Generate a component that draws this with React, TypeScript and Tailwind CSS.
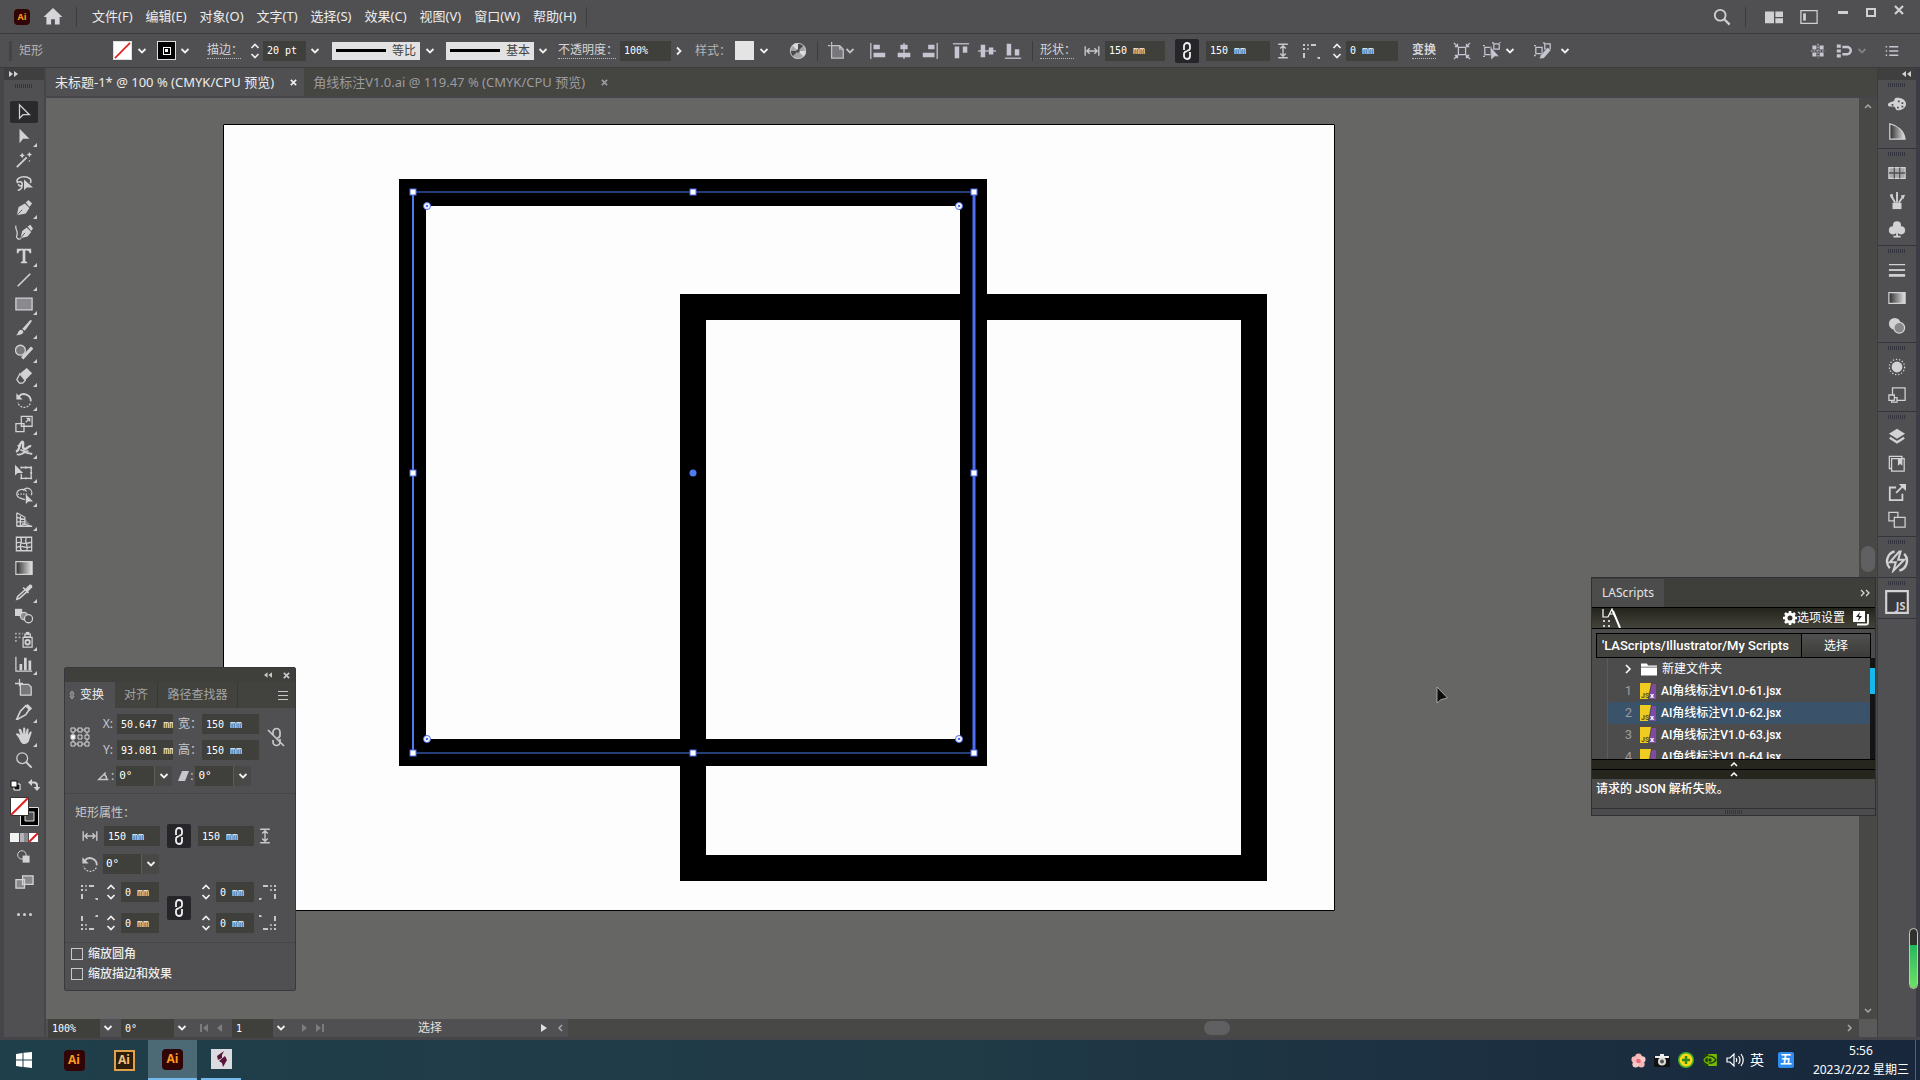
import type { ReactNode } from "react";
import clsx from "clsx";

const sans = "font-['Noto_Sans','Noto_Sans_CJK_SC',sans-serif]";
const mono = "font-['DejaVu_Sans_Mono','Noto_Sans_CJK_SC',monospace]";

/* ---------- shared bits ---------- */

function Icon({ size = "size-5", className, children }: { size?: string; className?: string; children: ReactNode }) {
  return (
    <svg
      viewBox="0 0 20 20"
      className={clsx(size, "shrink-0", className)}
      fill="none"
      stroke="currentColor"
      strokeWidth="1.4"
      aria-hidden
    >
      {children}
    </svg>
  );
}

function Chevron({ label, className }: { label: string; className?: string }) {
  return (
    <button aria-label={label} className={clsx("flex h-5 w-4 shrink-0 items-center justify-center text-[#f0f0f0]", className)}>
      <svg viewBox="0 0 10 6" className="h-[6px] w-[10px]" fill="none" stroke="currentColor" strokeWidth="1.8">
        <path d="M1.5 1 5 4.5 8.5 1" />
      </svg>
    </button>
  );
}

function Spinner({ label, className }: { label: string; className?: string }) {
  return (
    <button aria-label={label} className={clsx("flex h-5 w-3 shrink-0 items-center justify-center text-[#f0f0f0]", className)}>
      <svg viewBox="0 0 10 16" className="h-4 w-[10px]" fill="none" stroke="currentColor" strokeWidth="1.7">
        <path d="M1.5 5 5 1.5 8.5 5M1.5 11 5 14.5 8.5 11" />
      </svg>
    </button>
  );
}

function Field({ label, value, className }: { label: string; value: string; className?: string }) {
  return (
    <input
      aria-label={label}
      defaultValue={value}
      className={clsx("h-5 shrink-0 bg-[#3f3f3b] px-1 text-[10px] text-white outline-none", mono, className)}
    />
  );
}

function LinkButton({ label, className }: { label: string; className?: string }) {
  return (
    <button
      aria-label={label}
      className={clsx("flex size-6 shrink-0 items-center justify-center rounded-[2px] bg-[#26262a] text-[#f0f0f0]", className)}
    >
      <svg viewBox="0 0 10 18" className="h-[18px] w-[10px]" fill="none" stroke="currentColor" strokeWidth="1.8">
        <path d="M2 8V4a3 3 0 0 1 6 0v2a2.500 2.500 0 0 1-3 2.500M8 10v4a3 3 0 0 1-6 0v-2a2.500 2.500 0 0 1 3-2.500" />
      </svg>
    </button>
  );
}

const WidthIcon = ({ className }: { className?: string }) => (
  <Icon size="size-4" className={clsx("text-[#c8c8cc]", className)}>
    <path d="M1.500 4v12M18.500 4v12M4 10h12M7 6.500 3.500 10 7 13.500M13 6.500l3.500 3.500-3.500 3.500" strokeWidth="1.700" />
  </Icon>
);

const HeightIcon = ({ className }: { className?: string }) => (
  <Icon size="size-4" className={clsx("text-[#c8c8cc]", className)}>
    <path d="M4 1.500h12M4 18.500h12M10 4v12M6.500 7 10 3.500 13.500 7M6.500 13l3.500 3.500 3.500-3.500" strokeWidth="1.700" />
  </Icon>
);

function CornerIcon({ turn = "", className }: { turn?: string; className?: string }) {
  return (
    <Icon className={clsx("text-[#c8c8cc]", turn, className)}>
      <path d="M2 4h2M2 8h2M3 12v5M10 4h5" strokeWidth="2" />
      <path d="M6 4h2M6 8h2" strokeWidth="2" opacity=".7" />
      <path d="M16 16h3v2h-2z" fill="currentColor" stroke="none" />
    </Icon>
  );
}

const RotateIcon = () => (
  <>
    <path d="M4 6.500a7.500 7.500 0 0 1 13.500 5" strokeWidth="2" />
    <path d="M17 14a7.500 7.500 0 0 1-14-1.500" strokeDasharray="2 1.500" />
    <path d="M1.500 2.500v7h7z" fill="currentColor" stroke="none" />
  </>
);

function AiBadge({ className, framed }: { className?: string; framed?: boolean }) {
  return (
    <span
      className={clsx(
        "flex shrink-0 items-center justify-center font-['Open_Sans',sans-serif] font-bold",
        framed ? "border-2 border-[#e0a04c] bg-[#2e1c0a] text-[#f2c27c]" : "rounded-[4px] bg-[#310405] text-[#ff9b1a]",
        className,
      )}
    >
      Ai
    </span>
  );
}

const Divider = ({ className }: { className?: string }) => <span className={clsx("h-5 w-px shrink-0 bg-[#3c3c3a]", className)} />;

const Grip = ({ className }: { className?: string }) => (
  <span className={clsx("h-[4px] w-[18px] bg-[repeating-linear-gradient(90deg,#35353f_0_1px,transparent_1px_2px)]", className)} />
);

/* ---------- menu bar ---------- */

const menus = ["文件(F)", "编辑(E)", "对象(O)", "文字(T)", "选择(S)", "效果(C)", "视图(V)", "窗口(W)", "帮助(H)"];

function MenuBar() {
  return (
    <header className="flex h-[34px] shrink-0 items-center border-b border-[#3a3a3a] bg-[#505052] text-[13px] text-[#ececec]">
      <AiBadge className="ml-[14px] size-4 text-[9px]" />
      <button aria-label="主页" className="ml-[13px] text-[#d6d6da]">
        <svg viewBox="0 0 20 18" className="h-[17px] w-5" fill="currentColor">
          <path d="M10 0 20 9.500h-3V17.500h-5v-5.500H8v5.500H3V9.500H0z" />
        </svg>
      </button>
      <Divider className="ml-[13px]" />
      <nav className="ml-[15px] flex gap-[13px] whitespace-nowrap">
        {menus.map((m) => (
          <button key={m}>{m}</button>
        ))}
      </nav>
      <Divider className="ml-[10px]" />
      <div className="ml-auto flex h-full items-center text-[#d0d0d4]">
        <button aria-label="搜索">
          <Icon size="size-[18px]">
            <circle cx="8" cy="8" r="6" strokeWidth="2" />
            <path d="m12.500 12.500 6 6" strokeWidth="2.500" />
          </Icon>
        </button>
        <Divider className="ml-[14px]" />
        <button aria-label="排列文档" className="ml-[19px]">
          <Icon size="size-[18px]">
            <path d="M0 4h10v13H0zM11.500 4H20v6h-8.500zM11.500 11.500H20V17h-8.500z" fill="currentColor" stroke="none" />
          </Icon>
        </button>
        <button aria-label="切换工作区" className="ml-[17px]">
          <Icon size="size-[18px]">
            <path d="M1 3h18v14H1z" />
            <path d="M3.500 6h3v8h-3z" fill="currentColor" stroke="none" />
          </Icon>
        </button>
        <div className="mr-4 ml-[20px] flex h-5 gap-[18px] self-start">
          <button aria-label="最小化" className="flex w-[10px] items-center pt-1">
            <span className="h-[3px] w-[10px] bg-current" />
          </button>
          <button aria-label="最大化" className="flex w-[10px] items-center pt-1">
            <span className="h-[9px] w-[10px] border-2 border-current" />
          </button>
          <button aria-label="关闭" className="flex w-[10px] items-center">
            <svg viewBox="0 0 10 10" className="size-[10px]" stroke="currentColor" strokeWidth="2.200">
              <path d="m1 1 8 8M9 1 1 9" />
            </svg>
          </button>
        </div>
      </div>
    </header>
  );
}

/* ---------- control bar ---------- */

const alignIcons: { label: string; node: ReactNode; gap: string }[] = [
  { label: "左对齐", gap: "ml-[11px]", node: <><path d="M2 1v18" /><path d="M5 3h7v5H5zM5 12h13v5H5z" fill="currentColor" stroke="none" /></> },
  { label: "水平居中", gap: "ml-[8px]", node: <><path d="M10 1v18" /><path d="M6 3h8v5H6zM3 12h14v5H3z" fill="currentColor" stroke="none" /></> },
  { label: "右对齐", gap: "ml-[8px]", node: <><path d="M18 1v18" /><path d="M8 3h7v5H8zM2 12h13v5H2z" fill="currentColor" stroke="none" /></> },
  { label: "顶对齐", gap: "ml-[13px]", node: <><path d="M1 2h18" /><path d="M3 5h5v13H3zM12 5h5v7h-5z" fill="currentColor" stroke="none" /></> },
  { label: "垂直居中", gap: "ml-[8px]", node: <><path d="M0 10h20" /><path d="M3 3h5v14H3zM12 6h5v8h-5z" fill="currentColor" stroke="none" /></> },
  { label: "底对齐", gap: "ml-[8px]", node: <><path d="M1 18h18" /><path d="M3 2h5v13H3zM12 8h5v7h-5z" fill="currentColor" stroke="none" /></> },
];

const dotted = "border-b border-dotted border-[#b8b8c0] leading-4";

function StrokeSample({ text }: { text: string }) {
  return (
    <button className="flex h-[18px] w-[88px] shrink-0 items-center justify-between bg-[#e2e2e2] px-1 text-xs text-[#444]">
      <span className="h-[3px] w-[50px] bg-black" />
      {text}
    </button>
  );
}

function ControlBar() {
  return (
    <div className="flex h-[34px] shrink-0 items-center border-b border-[#3a3a3a] bg-[#505052] text-xs whitespace-nowrap text-[#d4d4d8]">
      <span className="ml-[9px] h-5 w-[3px] bg-[#434343]" />
      <span className="ml-[7px] w-[94px] text-[#b4b4b8]">矩形</span>
      <button aria-label="填色" className="size-[19px] shrink-0 border border-[#ddd] bg-white">
        <svg viewBox="0 0 18 18" className="size-full" stroke="#e02020" strokeWidth="1.800">
          <path d="m1 17 16-16" />
        </svg>
      </button>
      <Chevron label="填色选项" className="ml-[2px]" />
      <button aria-label="描边颜色" className="ml-[7px] flex size-[19px] shrink-0 items-center justify-center border border-[#ddd] bg-black">
        <span className="flex size-[8px] items-center justify-center border border-white">
          <span className="size-[3px] bg-white" />
        </span>
      </button>
      <Chevron label="描边颜色选项" className="ml-[1px]" />
      <button className={clsx("ml-[14px] w-[34px] text-left", dotted)}>描边：</button>
      <Spinner label="描边粗细增减" className="ml-[8px]" />
      <Field label="描边粗细" value="20 pt" className="ml-[2px] w-[43px]" />
      <Chevron label="描边粗细选项" className="ml-[1px]" />
      <div className="ml-[9px]"><StrokeSample text="等比" /></div>
      <Chevron label="变量宽度配置" className="ml-[2px]" />
      <div className="ml-[8px]"><StrokeSample text="基本" /></div>
      <Chevron label="画笔定义" className="ml-[1px]" />
      <button className={clsx("ml-[7px] w-[58px] text-left", dotted)}>不透明度：</button>
      <Field label="不透明度" value="100%" className="ml-[4px] w-[51px]" />
      <Chevron label="不透明度选项" className="-rotate-90" />
      <span className="ml-[8px] w-[34px] text-[#b4b4b8]">样式：</span>
      <button aria-label="图形样式" className="ml-[6px] size-[19px] shrink-0 bg-[#e4e4e4]" />
      <Chevron label="图形样式选项" className="ml-[2px]" />
      <button aria-label="重新着色图稿" className="ml-[17px]">
        <Icon size="size-[18px]" className="text-[#c8c8cc]">
          <circle cx="10" cy="10" r="9" fill="#a4a4a8" stroke="none" />
          <path d="M10 10V1a9 9 0 0 1 6.400 2.600zM10 10l-6.400 6.400A9 9 0 0 1 1 10z" fill="#4a4a4e" stroke="none" />
          <path d="M10 10h9a9 9 0 0 1-2.600 6.400zM10 10 3.600 3.600A9 9 0 0 1 10 1z" fill="#dcdce0" stroke="none" />
          <circle cx="10" cy="10" r="8.500" strokeWidth="1" />
          <circle cx="10" cy="10" r="2" fill="#505052" stroke="none" />
        </Icon>
      </button>
      <Divider className="ml-[10px]" />
      <button aria-label="对齐到画板" className="ml-[10px] flex items-center text-[#c0c0c4]">
        <Icon size="size-[18px]">
          <path d="M4 4h9l4 4v10H4zM13 4v4h4M0 4h3M4 0v3" fill="#77777b" />
        </Icon>
      </button>
      <Chevron label="对齐选项" className="-ml-1 opacity-70" />
      {alignIcons.map((a) => (
        <button key={a.label} aria-label={a.label} className={a.gap}>
          <Icon size="size-[18px]" className="text-[#c6c6d2]">{a.node}</Icon>
        </button>
      ))}
      <Divider className="ml-[10px]" />
      <button className={clsx("ml-[7px] w-[34px] text-left", dotted)}>形状：</button>
      <WidthIcon className="ml-[10px]" />
      <Field label="形状宽度" value="150 mm" className="ml-[5px] w-[60px]" />
      <LinkButton label="约束宽度和高度比例" className="ml-[10px]" />
      <Field label="形状高度" value="150 mm" className="ml-[7px] w-[64px]" />
      <HeightIcon className="ml-[5px]" />
      <CornerIcon className="ml-[10px]" />
      <Spinner label="圆角半径增减" className="ml-[10px]" />
      <Field label="圆角半径" value="0 mm" className="ml-[3px] w-[52px]" />
      <button className={clsx("ml-[14px] font-bold", dotted)}>变换</button>
      <button aria-label="隔离所选对象" className="ml-[17px] text-[#c6c6d2]">
        <Icon size="size-[18px]">
          <path d="M6 6h8v8H6zM1 1l4 4M19 1l-4 4M1 19l4-4M19 19l-4-4M2 5h3V2M18 5h-3V2M2 15h3v3M18 15h-3v3" />
        </Icon>
      </button>
      <button aria-label="选择相似对象" className="ml-[12px] text-[#c6c6d2]">
        <Icon size="size-[18px]">
          <path d="M2 6h7v8H2zM12 2h6v6h-6zM0 4h2M0 16h2M19 1v-1M10 1h2" />
          <path d="m8 5 10 11h-5l-4 4z" fill="currentColor" stroke="#505052" strokeWidth=".6" />
        </Icon>
      </button>
      <Chevron label="选择相似选项" className="ml-[1px]" />
      <button aria-label="编辑相似形状" className="ml-[16px] text-[#c6c6d2]">
        <Icon size="size-[18px]">
          <path d="M2 6h7v7H2zM12 2h6v6h-6zM0 4h2M0 15h2M10 1h2" />
          <path d="m6 19 1-4 8-9 4 3-8 9z" fill="currentColor" stroke="#505052" strokeWidth=".6" />
        </Icon>
      </button>
      <Chevron label="编辑相似选项" className="ml-[5px]" />
      <div className="ml-auto flex items-center text-[#c6c6d2]">
        <button aria-label="对齐像素">
          <Icon size="size-4">
            <path d="M3 3h5v5H3zM12 3h5v5h-5zM3 12h5v5H3zM12 12h5v5h-5z" fill="currentColor" stroke="none" />
            <path d="M10 1v18M1 10h18" strokeDasharray="2 1.500" />
          </Icon>
        </button>
        <button aria-label="贴紧选项" className="ml-[10px]">
          <Icon size="size-4">
            <path d="M1 2h5v4H1zM1 8h5v4H1zM1 14h5v4H1z" fill="currentColor" stroke="none" />
            <path d="M8 5h6a4 4 0 0 1 0 9H8" strokeWidth="3" />
          </Icon>
        </button>
        <Chevron label="贴紧下拉" className="ml-[2px] opacity-30" />
        <button aria-label="面板菜单" className="mr-[21px] ml-[15px]">
          <Icon size="size-[14px]">
            <path d="M1 4h2M1 10h2M1 16h2M6 4h13M6 10h13M6 16h13" strokeWidth="2" />
          </Icon>
        </button>
      </div>
    </div>
  );
}

/* ---------- left tool rail ---------- */

const solid = { fill: "currentColor", stroke: "none" };

const tools: { label: string; more?: boolean; node: ReactNode }[] = [
  { label: "选择工具", node: <path d="M5 2v15l4-4h7z" /> },
  { label: "直接选择工具", more: true, node: <path d="M5 2v16l4-5h7z" {...solid} /> },
  { label: "魔棒工具", node: <><path d="m2 18 11-11" strokeWidth="2" /><path d="m8 2 1 2 2 1-2 1-1 2-1-2-2-1 2-1zM16 1l1 2 2 1-2 1-1 2-1-2-2-1 2-1zM16 10l1 1-1 1-1-1z" {...solid} /></> },
  { label: "套索工具", node: <><path d="M3 9C0 4 6 2 10 2c6 0 9 3 7 7M3 9c0-2 5-2 5 1s-4 3-4 0M8 11c0 4-3 6-5 6" strokeWidth="1.700" /><path d="M10 5v12l3-3h7z" {...solid} /></> },
  { label: "钢笔工具", more: true, node: <><path d="m2 18 2-9 7-4 5 5-4 6z" {...solid} /><path d="m12 4 3-3 4 4-3 4z" {...solid} /><path d="m2 18 6-6" stroke="#505052" strokeWidth="1" /></> },
  { label: "曲率工具", node: <><path d="M1 3c-1 5 3 6 1 11-1 3 2 5 5 3" /><path d="m6 17 2-8 5-4 5 5-4 5zM14 4l3-2 3 4-2 3z" {...solid} /><path d="m6 17 5-6" stroke="#505052" strokeWidth="1" /></> },
  { label: "文字工具", more: true, node: <path d="M2 2h16v5h-2c0-2-1-3-3-3h-1.500v11c0 1 .5 1.500 2 1.500V18H6.500v-1.500c1.500 0 2-.5 2-1.500V4H7C5 4 4 5 4 7H2z" {...solid} /> },
  { label: "直线段工具", more: true, node: <path d="M3 17 17 3" strokeWidth="1.800" /> },
  { label: "矩形工具", more: true, node: <path d="M1 3.500h18v13H1z" fill="#8a8a8e" /> },
  { label: "画笔工具", more: true, node: <><path d="m8 11 9-10 2 1-8 11z" {...solid} /><path d="M1 18c3-1 2-6 6-6 3 1 3 4 0 5-2 1-4 1-6 1z" {...solid} /></> },
  { label: "Shaper 工具", more: true, node: <><circle cx="6" cy="8" r="5.500" fill="#77777b" /><path d="m8 17 11-12" strokeWidth="3.600" /></> },
  { label: "橡皮擦工具", more: true, node: <><path d="m6 7 7-6 6 6-8 8z" {...solid} /><path d="m5.500 7.500 6 7.500-3 3H5l-3-4z" /></> },
  { label: "旋转工具", more: true, node: <RotateIcon /> },
  { label: "比例缩放工具", more: true, node: <><path d="M7 1.500h12v11H7zM1 9.500h9v9H1zM12 8l4-4" /><path d="M12 3h5v5z" {...solid} /></> },
  { label: "宽度工具", more: true, node: <><path d="M1 14c5-1 3-9 7-11 3 1-1 6 2 8 4 1 4-4 8-3" strokeWidth="2.600" /><path d="M2 17c5 2 7-3 10-2 4 2 5 0 7 2M6 6 3 8M6 12c3 1 5 3 9 1" strokeWidth="1.900" /></> },
  { label: "自由变换工具", more: true, node: <><path d="M8 5h10v12H7v-5" /><path d="M6 4h2v2H6zM17 4h2v2h-2zM17 10h2v2h-2zM17 16h2v2h-2zM6 16h2v2H6zM11 4h2v2h-2zM11 16h2v2h-2z" {...solid} /><path d="M0 2v12l3-3h6z" {...solid} /></> },
  { label: "形状生成器工具", more: true, node: <><path d="M13 5a6 5 0 1 0-8 7l6 2M9 4a5 5 0 0 1 9 5" /><path d="M3 8h11" strokeDasharray="1.500 1.500" /><path d="M12 8v11l3-3h5z" {...solid} /></> },
  { label: "透视网格工具", more: true, node: <><path d="M2 2v15M2 2l9 5v8l-9 2M2 7l9 2.500M2 12l9 0M6 4v12" /><path d="m8 14 11 3H2" /><path d="m11 9 6 6-6-1z" {...solid} opacity=".4" /></> },
  { label: "网格工具", node: <><path d="M1.500 2.500h17v15h-17z" /><path d="M1.500 9c5-3 6 3 17-1M6 2.500c4 5-3 8 1 15M13 2.500c-4 6 3 9 0 15M1.500 14c7-4 9 2 17-1" /></> },
  { label: "渐变工具", node: <path d="M1 3h18v14H1z" fill="url(#railGradient)" /> },
  { label: "吸管工具", more: true, node: <><path d="m11 7 5-5c2-1 4 1 3 3l-5 5z" {...solid} /><path d="m12 7-9 8-1 3 3-1 9-8M9 5l6 6" strokeWidth="1.700" /></> },
  { label: "混合工具", node: <><path d="M0 2h8v8H0z" {...solid} /><circle cx="10" cy="10" r="4" fill="#8a8a8e" /><circle cx="15" cy="13" r="4.500" fill="#505052" /></> },
  { label: "符号喷枪工具", more: true, node: <><path d="M9 7h10v11H9zM11 3.500h6v3h-6z" /><path d="M12 1h4v3h-4z" {...solid} /><circle cx="14" cy="12.500" r="2.500" strokeWidth="2" /><path d="M0 2h2v2H0zM4 2h2v2H4zM8 2h1v2H8zM0 6h2v2H0zM4 6h2v2H4zM0 10h2v2H0z" {...solid} opacity=".7" /></> },
  { label: "柱形图工具", more: true, node: <><path d="M1 2v16h18" /><path d="M5 10h3v7H5zM10 3h3v14h-3zM15 6h3v11h-3z" {...solid} /></> },
  { label: "画板工具", node: <><path d="M6 6h9l3 3v9H6z" fill="#77777b" /><path d="M0 5h9M5 0v8" /></> },
  { label: "切片工具", more: true, node: <><path d="m2 18 4-9 6-6 4 4-4 6-9 5z" strokeWidth="1.800" /><path d="m12 3 2-2 5 5-3 3z" {...solid} /></> },
  { label: "抓手工具", more: true, node: <path d="M4 12 1 8c1-2 3-1 5 1L4 3c1-2 2-1 3 0l2 5V2c0-2 2-2 2.500 0v6L13 2.500c1-1.500 2.500-.5 2 1L14.500 9l2-3.500c1-1 2.500 0 2 1L16 14c-1 4-3 5-6 5s-4-3-6-7z" {...solid} /> },
  { label: "缩放工具", node: <><circle cx="8" cy="8" r="6" /><path d="m12.500 12.500 6 6" strokeWidth="2.200" /></> },
];

function ToolRail() {
  return (
    <aside className="flex w-[46px] shrink-0 flex-col border-r-2 border-l-4 border-[#45454a] bg-[#505052] text-[#d2d2d4]">
      <svg className="h-0 w-0" aria-hidden>
        <linearGradient id="railGradient">
          <stop offset="0" stopColor="#2c2c2e" />
          <stop offset="1" stopColor="#e6e6e6" />
        </linearGradient>
      </svg>
      <button aria-label="展开工具" className="flex h-3 items-center bg-[#3f3f3f] pl-[5px]">
        <svg viewBox="0 0 9 6" className="h-[6px] w-[9px]" fill="currentColor">
          <path d="m0 0 4 3-4 3zM5 0l4 3-4 3z" />
        </svg>
      </button>
      <div className="flex h-5 items-start justify-center pt-1"><Grip /></div>
      {tools.map((t, i) => (
        <button
          key={t.label}
          aria-label={t.label}
          className={clsx("relative mx-[6px] my-px flex h-[22px] shrink-0 items-center justify-center rounded-[2px]", i === 0 && "bg-[#2a2a2c]")}
        >
          <Icon size="size-[18px]">{t.node}</Icon>
          {t.more && (
            <svg viewBox="0 0 4 4" className="absolute right-px bottom-0 size-1" fill="currentColor">
              <path d="M4 0v4H0z" />
            </svg>
          )}
        </button>
      ))}
      <div className="mt-[7px] flex justify-between pr-1 pl-[6px]">
        <button aria-label="默认填色和描边">
          <svg viewBox="0 0 11 11" className="size-[11px]">
            <path d="M4 4h6v6H4z" fill="#111" stroke="#fff" strokeWidth="1" />
            <path d="M1 1h6v6H1z" fill="#fff" stroke="#111" strokeWidth="1" />
          </svg>
        </button>
        <button aria-label="互换填色和描边">
          <svg viewBox="0 0 12 12" className="size-3" fill="none" stroke="currentColor" strokeWidth="2">
            <path d="M3 3.500h3a3 3 0 0 1 3 3V8" />
            <path d="M0 3.500 4 0v7zM5.500 8h7L9 12z" fill="currentColor" stroke="none" />
          </svg>
        </button>
      </div>
      <svg viewBox="0 0 29 29" className="mt-[6px] ml-[6px] size-[29px]">
        <path d="M10.500 10.500h18v18h-18z" fill="#000" stroke="#ddd" />
        <path d="M15 15h9v9h-9z" fill="#505052" stroke="#ddd" />
        <path d="M.5.5h18v18H.5z" fill="#fff" stroke="#333" />
        <path d="m1 18 17-17" stroke="#e02020" strokeWidth="2" />
      </svg>
      <svg viewBox="0 0 28 9" className="mt-[7px] ml-[6px] h-[9px] w-[28px]">
        <path d="M0 0h9v9H0z" fill="#f2f2f2" />
        <path d="M10 0h8v9h-8z" fill="#b4b4b8" />
        <path d="M14 0h4v9h-4z" fill="#8a8a8e" />
        <path d="M19 0h9v9h-9z" fill="#fff" />
        <path d="m19 9 9-9" stroke="#e02020" strokeWidth="2" />
      </svg>
      <button aria-label="绘图模式" className="mt-[8px] self-center">
        <Icon size="size-[14px]">
          <circle cx="7" cy="7" r="6" />
          <path d="M8 8h10v10H8z" {...solid} />
        </Icon>
      </button>
      <button aria-label="屏幕模式" className="mt-[9px] self-center">
        <Icon size="size-[19px]">
          <path d="M1 7h9v9H1zM8 3h11v9H8z" fill="#88888c" />
        </Icon>
      </button>
      <button aria-label="编辑工具栏" className="mt-[17px] flex gap-[3px] self-center py-1">
        <span className="size-[3px] rounded-full bg-current" />
        <span className="size-[3px] rounded-full bg-current" />
        <span className="size-[3px] rounded-full bg-current" />
      </button>
    </aside>
  );
}

/* ---------- right panel dock ---------- */

const dock: { label: string; node: ReactNode; big?: boolean }[][] = [
  [
    { label: "颜色", node: <><path d="M10 3c6 0 10 3 10 7s-4 7-9 7c-3 0-2-3-4-4s-7 1-7-2 4-3 6-4 0-4 4-4z" {...solid} /><path d="M11 6h2v2h-2zM15 8h2v2h-2zM15 12h2v2h-2zM10 13h2v2h-2zM4 10h2v2H4z" fill="#505052" stroke="none" /></> },
    { label: "颜色参考", node: <path d="M2 1v17h17C18 9 11 3 2 1z" fill="url(#railGradient)" /> },
  ],
  [
    { label: "色板", node: <><path d="M1 4h18v12H1z" fill="#a8a8ac" /><path d="M7 4v12M13 4v12M1 10h18" stroke="#505052" /></> },
    { label: "画笔", node: <><path d="M5 12h10v7H5z" {...solid} /><path d="M8 12 4 5M10 12V3M12 12l4-6" strokeWidth="2" /><path d="M2 3l3-1 1 5-3-1zM9 0h2v5H9zM14 4l5-1-2 5z" {...solid} /></> },
    { label: "符号", node: <><circle cx="10" cy="6" r="4.500" {...solid} /><circle cx="5.500" cy="11.500" r="4.500" {...solid} /><circle cx="14.500" cy="11.500" r="4.500" {...solid} /><path d="M10 10v8M6 18.500h8" strokeWidth="2" /></> },
  ],
  [
    { label: "描边", node: <><path d="M1 4h18" /><path d="M1 10h18" strokeWidth="2" /><path d="M1 16h18" strokeWidth="3" /></> },
    { label: "渐变", node: <path d="M1 4h18v12H1z" fill="url(#railGradient)" /> },
    { label: "透明度", node: <><circle cx="7.500" cy="7.500" r="6.500" {...solid} /><circle cx="12.500" cy="12" r="6" fill="#88888c" /></> },
  ],
  [
    { label: "外观", node: <><circle cx="10" cy="10" r="6" {...solid} /><circle cx="10" cy="10" r="8.500" strokeDasharray="1.500 2" /></> },
    { label: "图形样式", node: <path d="M5 10V2h14v14h-9M1 10h6v6H1zM4 16v2h6v-5H7" /> },
  ],
  [
    { label: "图层", node: <><path d="m10 2 9 5.500-9 5.500-9-5.500z" {...solid} /><path d="m2 12 8 5 8-5" strokeWidth="2.500" /></> },
    { label: "库", node: <><path d="M4 4h14v14H4zM4 15H1.500V1.500h14V4" /><path d="M11 4h5v8l-2.500-2L11 12z" {...solid} /></> },
    { label: "资源导出", node: <><path d="M9 5H2v14h14v-7M9 11l8-8" strokeWidth="2" /><path d="M12 1h8v8z" {...solid} /></> },
    { label: "画板", node: <path d="M7 11H1V1.500h10V7M7 7h12v11H7z" /> },
  ],
  [{ label: "LAScripts", big: true, node: <><path d="M8 2a8.500 8.500 0 0 0-4 14M12 18a8.500 8.500 0 0 0 4-14" strokeWidth="2" /><path d="m12 2-8 9h5l-2 7 9-9h-5l2-7z" strokeWidth="1.700" /></> }],
  [
    {
      label: "JS",
      big: true,
      node: (
        <>
          <path d="M1 1h18v18H1z" fill="#3a3a3c" strokeWidth="1.800" />
          <text x="17" y="17" textAnchor="end" fontSize="9" fontWeight="700" fill="currentColor" stroke="none" fontFamily="Open Sans, sans-serif">
            JS
          </text>
        </>
      ),
    },
  ],
];

function PanelDock() {
  return (
    <aside className="flex w-[43px] shrink-0 flex-col border-r-4 border-l border-[#3c3c44] bg-[#505052] text-[#d2d2d4]">
      <button aria-label="展开面板" className="flex h-3 items-center justify-end bg-[#3f3f3f] pr-[5px]">
        <svg viewBox="0 0 9 6" className="h-[6px] w-[9px]" fill="currentColor">
          <path d="M4 0 0 3l4 3zM9 0 5 3l4 3z" />
        </svg>
      </button>
      {dock.map((group, i) => (
        <div key={i} className="flex flex-col items-center border-b border-[#34343e] pb-[2px]">
          <div className="flex h-[10px] items-center"><Grip /></div>
          {group.map((d) => (
            <button key={d.label} aria-label={d.label} className="flex h-7 items-center">
              <Icon size={d.big ? "size-6" : "size-[18px]"}>{d.node}</Icon>
            </button>
          ))}
        </div>
      ))}
    </aside>
  );
}

/* ---------- canvas ---------- */

const handles = [
  [413, 192], [693, 192], [974, 192],
  [413, 473], [974, 473],
  [413, 753], [693, 753], [974, 753],
];
const corners = [[427, 206], [959, 206], [427, 739], [959, 739]];

function Canvas() {
  return (
    <main className="relative min-w-0 flex-1 overflow-hidden bg-[#666664]">
      <svg viewBox="223 124 1112 787" className="absolute top-[26px] left-[177px] h-[787px] w-[1112px] max-w-none bg-[#fdfdfd]" fill="none">
        <path d="M223.500 124.500h1111v786h-1111z" stroke="#000" />
        <path d="M693 307h561v561H693z" stroke="#000" strokeWidth="26" />
        <path d="M412.500 192.500h561v560h-561z" stroke="#000" strokeWidth="27" />
        <path d="M413 192h561v561H413z" stroke="#4d7cf0" strokeWidth="1" />
        <path d="M413 192v561" stroke="#4d7cf0" strokeWidth="2" />
        <path d="M974 192v561" stroke="#4d6cf0" strokeWidth="3" />
        {handles.map(([x, y]) => (
          <rect key={`${x}-${y}`} x={x - 3} y={y - 3} width="6" height="6" fill="#fff" stroke="#4d6cf0" />
        ))}
        {corners.map(([x, y]) => (
          <g key={`${x}-${y}`}>
            <circle cx={x} cy={y} r="3.500" fill="#fff" stroke="#4d6cf0" />
            <circle cx={x} cy={y} r="1.300" fill="#4d6cf0" />
          </g>
        ))}
        <circle cx="693" cy="473" r="3.500" fill="#4d7cf0" />
      </svg>
      <svg viewBox="0 0 12 19" className="absolute top-[588px] left-[1390px] h-[19px] w-3">
        <path d="M1 1v16l4-3.500L11.500 12z" fill="#0c0c0c" stroke="#bbb" strokeWidth=".8" />
      </svg>
    </main>
  );
}

/* ---------- transform panel ---------- */

function PanelSelect({ label, className }: { label: string; className?: string }) {
  return (
    <div className={clsx("relative flex shrink-0 items-center bg-[#3f3f3b]", className)}>
      <select aria-label={label} className={clsx("h-5 w-full appearance-none pl-[3px] text-[11px] text-white outline-none", mono)}>
        <option>0°</option>
      </select>
      <span className="pointer-events-none absolute right-0 flex h-5 w-[18px] items-center justify-center border-l border-[#5e5e58] bg-[#484846]">
        <svg viewBox="0 0 10 6" className="h-[6px] w-[10px]" fill="none" stroke="#f0f0f0" strokeWidth="1.800">
          <path d="M1.500 1 5 4.500 8.500 1" />
        </svg>
      </span>
    </div>
  );
}

function TransformPanel() {
  return (
    <section className="absolute top-[599px] left-[18px] w-[232px] rounded-[2px] border border-[#38383e] bg-[#505052] pb-2 text-xs text-[#c8c8cc]">
      <div className="flex h-[14px] items-center justify-end gap-[11px] bg-[#3f3f3b] pr-[5px]">
        <button aria-label="折叠">
          <svg viewBox="0 0 9 6" className="h-[6px] w-2" fill="currentColor"><path d="M4 0 0 3l4 3zM9 0 5 3l4 3z" /></svg>
        </button>
        <button aria-label="关闭面板">
          <svg viewBox="0 0 8 8" className="size-[7px]" stroke="currentColor" strokeWidth="2"><path d="m1 1 6 6M7 1 1 7" /></svg>
        </button>
      </div>
      <div className="flex h-[26px] items-stretch bg-[#42423e]">
        <button className="flex w-[50px] items-center gap-[5px] bg-[#505052] pl-1 text-[#eee]">
          <svg viewBox="0 0 6 10" className="h-[10px] w-[6px]" fill="none" stroke="#aaa"><path d="m1 4 2-3 2 3zM1 6l2 3 2-3z" /></svg>
          变换
        </button>
        <button className="w-[43px] border-r border-[#37373a] text-[#a4a4a4]">对齐</button>
        <button className="w-[80px] border-r border-[#37373a] text-[#a4a4a4]">路径查找器</button>
        <button aria-label="面板菜单" className="mr-[7px] ml-auto flex flex-col justify-center gap-[3px]">
          <span className="h-px w-[10px] bg-current" />
          <span className="h-px w-[10px] bg-current" />
          <span className="h-px w-[10px] bg-current" />
        </button>
      </div>

      <div className="flex border-b border-[#46464a] px-[5px] pt-[6px] pb-[7px]">
        <svg viewBox="0 0 20 20" className="mt-[13px] size-5 shrink-0" fill="none" stroke="#d4d4d8">
          <path d="M1 1h4v4H1zM8 1h4v4H8zM15 1h4v4h-4zM8 8h4v4H8zM15 8h4v4h-4zM1 15h4v4H1zM8 15h4v4H8zM15 15h4v4h-4zM5 3h3M12 3h3M5 17h3M12 17h3M3 5v3M3 12v3M17 5v3M17 12v3" />
          <path d="M1 8h4v4H1z" fill="#fff" />
        </svg>
        <div className="ml-[7px] flex flex-col gap-[6px]">
          <div className="flex items-center">
            <span className="w-[16px] text-right">X:</span>
            <Field label="X" value="50.647 mm" className="ml-[4px] w-[56px] pr-0" />
            <span className="ml-[5px] w-[24px] whitespace-nowrap">宽：</span>
            <Field label="宽" value="150 mm" className="w-[57px]" />
          </div>
          <div className="flex items-center">
            <span className="w-[16px] text-right">Y:</span>
            <Field label="Y" value="93.081 mm" className="ml-[4px] w-[56px] pr-0" />
            <span className="ml-[5px] w-[24px] whitespace-nowrap">高：</span>
            <Field label="高" value="150 mm" className="w-[57px]" />
          </div>
          <div className="flex items-center">
            <svg viewBox="0 0 16 12" className="h-3 w-[14px]" fill="none" stroke="currentColor" strokeWidth="1.600"><path d="M13 10H2l8-8M8 4c2 1 3 3 3 6" /></svg>
            <span>:</span>
            <PanelSelect label="旋转" className="ml-[2px] w-[56px]" />
            <svg viewBox="0 0 12 10" className="ml-[6px] h-[10px] w-3" fill="currentColor"><path d="M4 0h7L7 10H0z" /></svg>
            <span>:</span>
            <PanelSelect label="倾斜" className="ml-[2px] w-[56px]" />
          </div>
        </div>
        <button aria-label="解除比例约束" className="mt-[13px] ml-[7px] size-5 shrink-0">
          <Icon>
            <path d="M7 8V5a3.500 3.500 0 0 1 7 0v3a3 3 0 0 1-3 3M14 12v3a3.500 3.500 0 0 1-7 0v-2M2 3l16 16" strokeWidth="1.700" />
          </Icon>
        </button>
      </div>

      <div className="border-b border-[#46464a] pb-[9px]">
        <h3 className="pt-[9px] pl-[10px] leading-5">矩形属性：</h3>
        <div className="mt-px flex items-center pl-[17px]">
          <WidthIcon />
          <Field label="矩形宽度" value="150 mm" className="ml-[6px] w-[56px]" />
          <LinkButton label="约束矩形比例" className="ml-[7px]" />
          <Field label="矩形高度" value="150 mm" className="ml-[7px] w-[56px]" />
          <HeightIcon className="ml-[3px]" />
        </div>
        <div className="mt-[6px] flex items-center pl-[16px]">
          <Icon size="size-[18px]"><RotateIcon /></Icon>
          <PanelSelect label="矩形角度" className="ml-[4px] w-[56px]" />
        </div>
        <div className="mt-2 flex items-center pl-[14px]">
          <div className="flex flex-col gap-[11px]">
            <CornerIcon />
            <CornerIcon turn="-scale-y-100" />
          </div>
          <div className="ml-[6px] flex flex-col gap-[11px]">
            <div className="flex items-center"><Spinner label="左上圆角增减" /><Field label="左上圆角" value="0 mm" className="ml-1 w-[38px]" /></div>
            <div className="flex items-center"><Spinner label="左下圆角增减" /><Field label="左下圆角" value="0 mm" className="ml-1 w-[38px]" /></div>
          </div>
          <LinkButton label="链接圆角半径值" className="ml-[8px]" />
          <div className="ml-[9px] flex flex-col gap-[11px]">
            <div className="flex items-center"><Spinner label="右上圆角增减" /><Field label="右上圆角" value="0 mm" className="ml-1 w-[38px]" /></div>
            <div className="flex items-center"><Spinner label="右下圆角增减" /><Field label="右下圆角" value="0 mm" className="ml-1 w-[38px]" /></div>
          </div>
          <div className="ml-[4px] flex flex-col gap-[11px]">
            <CornerIcon turn="-scale-x-100" />
            <CornerIcon turn="-scale-100" />
          </div>
        </div>
      </div>

      <div className="flex flex-col gap-1 pt-[3px] pl-[6px] font-medium text-[#ececec]">
        <label className="flex h-4 items-center gap-[5px]">
          <input type="checkbox" className="size-3 appearance-none border border-[#c8c8c8]" />
          缩放圆角
        </label>
        <label className="flex h-4 items-center gap-[5px]">
          <input type="checkbox" className="size-3 appearance-none border border-[#c8c8c8]" />
          缩放描边和效果
        </label>
      </div>
    </section>
  );
}

/* ---------- LAScripts panel ---------- */

const scripts = ["AI角线标注V1.0-61.jsx", "AI角线标注V1.0-62.jsx", "AI角线标注V1.0-63.jsx", "AI角线标注V1.0-64.jsx"];

function CollapseBar({ label }: { label: string }) {
  return (
    <button aria-label={label} className="flex h-[10px] w-full items-center justify-center border-t border-black bg-[#26261f] text-white">
      <svg viewBox="0 0 8 5" className="h-[5px] w-2" fill="none" stroke="currentColor" strokeWidth="1.500"><path d="M1 4 4 1l3 3" /></svg>
    </button>
  );
}

function ScriptsPanel() {
  return (
    <section className="absolute top-[509px] right-px w-[285px] border border-[#303034] bg-[#4c4c4c] font-['Roboto','Noto_Sans_CJK_SC',sans-serif] text-[13px] text-white">
      <div className="flex h-[29px] items-end justify-between bg-[#3e3e3a]">
        <button className="h-[28px] w-[72px] bg-[#4c4c4c] font-['Noto_Sans',sans-serif] text-xs text-[#e4e4e4]">LAScripts</button>
        <button aria-label="折叠面板" className="mr-[5px] mb-[10px]">
          <svg viewBox="0 0 10 8" className="h-2 w-[10px]" fill="none" stroke="#d8d8d8" strokeWidth="1.300"><path d="m1 1 3 3-3 3M6 1l3 3-3 3" /></svg>
        </button>
      </div>
      <div className="flex h-[22px] items-center border-y border-black bg-gradient-to-b from-[#24241e] to-[#44443c] pr-[6px] pl-[10px]">
        <svg viewBox="0 0 20 20" className="size-5" fill="none" stroke="#fff">
          <path d="M1 1v8h5M6 9l4-8 3 8M8 6h4" strokeWidth="1.200" />
          <path d="m11 3 7 17" strokeWidth="2" />
          <path d="M1 13h2M6 13h2M1 18h2M6 18h2" strokeWidth="1.500" />
        </svg>
        <button className="ml-auto flex items-center">
          <svg viewBox="0 0 14 14" className="size-[14px]">
            <circle cx="7" cy="7" r="4" fill="none" stroke="#fff" strokeWidth="3" />
            <path d="M7 0v3M7 11v3M0 7h3M11 7h3M2 2l2 2M10 10l2 2M12 2l-2 2M4 10l-2 2" stroke="#fff" strokeWidth="2.600" />
          </svg>
          <span className="text-xs">选项设置</span>
        </button>
        <button aria-label="脚本" className="ml-[8px]">
          <svg viewBox="0 0 16 16" className="size-4">
            <path d="M4 14.500h9.500a1.500 1.500 0 0 0 1.500-1.500V4" fill="none" stroke="#fff" strokeWidth="1.800" />
            <path d="M0 1h12v11H0z" fill="#fff" />
            <path d="M7 2 3 7h3l-1 4 4-5H6z" fill="#222" />
          </svg>
        </button>
      </div>
      <div className="mx-1 mt-1 flex h-[25px] border border-black">
        <input
          aria-label="脚本路径"
          defaultValue="'LAScripts/Illustrator/My Scripts"
          className="min-w-0 flex-1 bg-[#42423e] pl-[5px] text-[13px] font-medium outline-none"
        />
        <button className="w-[69px] border-l border-black bg-gradient-to-b from-[#505050] to-[#3c3c3a] text-xs">选择</button>
      </div>
      <div className="flex h-[101px]">
        <ul className="ml-[15px] min-w-0 flex-1 overflow-hidden border-l border-[#5c5c60]">
          <li className="flex h-[22px] items-center pl-[16px]">
            <svg viewBox="0 0 8 10" className="h-[10px] w-2" fill="none" stroke="#fff" strokeWidth="1.600"><path d="m2 1 4 4-4 4" /></svg>
            <svg viewBox="0 0 16 12" className="ml-[9px] h-[13px] w-4" fill="#fff"><path d="M0 0h6l1 2h9v1.200H0zM0 4h16v8H0z" /></svg>
            <span className="ml-[5px] text-xs">新建文件夹</span>
          </li>
          {scripts.map((s, i) => (
            <li key={s} className={clsx("flex h-[22px] items-center pl-[6px]", i === 1 && "rounded-l-[4px] bg-[#3a526a]")}>
              <span className="w-[18px] text-right text-[#9c9c9c]">{i + 1}</span>
              <svg viewBox="0 0 16 16" className="ml-[8px] size-4" aria-hidden>
                <path d="M0 0h11L8 16H0z" fill="#f0cc22" />
                <path d="M12 1h4v15H9z" fill="#8348a4" />
                <text x="1" y="15" fontSize="7" fontWeight="700" fill="#5c4a10">JS</text>
                <text x="10" y="15" fontSize="8" fontWeight="700" fill="#fff">x</text>
              </svg>
              <a href="#" className="ml-[5px] text-xs font-medium whitespace-nowrap">{s}</a>
            </li>
          ))}
        </ul>
        <div className="w-[5px] bg-[#141414] pt-[10px]">
          <div className="h-[26px] bg-[#16b8f0]" />
        </div>
      </div>
      <CollapseBar label="折叠列表" />
      <CollapseBar label="折叠消息" />
      <p className="h-[29px] px-1 text-xs leading-5 font-medium">请求的 JSON 解析失败。</p>
      <div className="flex h-[7px] items-center justify-center border-t border-[#303034]"><Grip /></div>
    </section>
  );
}

/* ---------- document window ---------- */

function DocTab({ title, active }: { title: string; active?: boolean }) {
  return (
    <div
      className={clsx(
        "flex items-center gap-4 pt-px pr-[7px] pl-[9px] whitespace-nowrap",
        active ? "bg-[#505052] text-[#ececec]" : "bg-[#454541] text-[#9c9ca0]",
      )}
    >
      <button>{title}</button>
      <button aria-label={`关闭 ${title}`}>
        <svg viewBox="0 0 8 8" className="size-[7px]" stroke="currentColor" strokeWidth="2"><path d="m1 1 6 6M7 1 1 7" /></svg>
      </button>
    </div>
  );
}

function StatusBar() {
  const step = "flex h-4 w-4 items-center justify-center";
  return (
    <footer className="flex h-[18px] shrink-0 items-center bg-[#505052] text-xs text-[#e0e0e0]">
      <Field label="缩放" value="100%" className="ml-[2px] h-4 w-[52px]" />
      <Chevron label="缩放选项" />
      <Field label="旋转视图" value="0°" className="ml-[5px] h-4 w-[53px]" />
      <Chevron label="旋转视图选项" />
      <button aria-label="首页" className={clsx(step, "ml-[6px] text-[#7c7c80]")}>
        <svg viewBox="0 0 8 8" className="size-2" fill="currentColor"><path d="M0 0h2v8H0zM8 0v8L3 4z" /></svg>
      </button>
      <button aria-label="上一项" className={clsx(step, "text-[#7c7c80]")}>
        <svg viewBox="0 0 8 8" className="size-2" fill="currentColor"><path d="M6 0v8L1 4z" /></svg>
      </button>
      <Field label="画板导航" value="1" className="ml-[4px] h-4 w-[41px]" />
      <Chevron label="画板导航选项" />
      <button aria-label="下一项" className={clsx(step, "ml-[7px] text-[#7c7c80]")}>
        <svg viewBox="0 0 8 8" className="size-2" fill="currentColor"><path d="M2 0v8l5-4z" /></svg>
      </button>
      <button aria-label="末项" className={clsx(step, "text-[#7c7c80]")}>
        <svg viewBox="0 0 8 8" className="size-2" fill="currentColor"><path d="M6 0h2v8H6zM0 0v8l5-4z" /></svg>
      </button>
      <span className="w-[204px] text-center leading-4">选择</span>
      <button aria-label="状态菜单" className={clsx(step, "ml-[4px]")}>
        <svg viewBox="0 0 8 8" className="size-2" fill="currentColor"><path d="M1 0v8l6-4z" /></svg>
      </button>
      <button aria-label="向左滚动" className="flex w-4 justify-center text-[#a8a8a8]">
        <svg viewBox="0 0 6 8" className="h-2 w-[6px]" fill="none" stroke="currentColor" strokeWidth="1.500"><path d="M5 1 2 4l3 3" /></svg>
      </button>
      <div className="flex h-full min-w-0 flex-1 items-center justify-center bg-[#484846] pl-6">
        <div className="h-[14px] w-[26px] rounded-full bg-[#606062]" />
      </div>
      <button aria-label="向右滚动" className="flex h-full w-[18px] items-center justify-center bg-[#484846] text-[#a8a8a8]">
        <svg viewBox="0 0 6 8" className="h-2 w-[6px]" fill="none" stroke="currentColor" strokeWidth="1.500"><path d="m1 1 3 3-3 3" /></svg>
      </button>
      <span className="h-full w-[18px] bg-[#5a5a5a]" />
    </footer>
  );
}

function DocumentWindow() {
  return (
    <div className="relative flex min-w-0 flex-1 flex-col text-[13px]">
      <div className="flex h-[30px] shrink-0 border-b-2 border-[#45454a] bg-[#454541]">
        <DocTab title="未标题-1* @ 100 % (CMYK/CPU 预览)" active />
        <DocTab title="角线标注V1.0.ai @ 119.47 % (CMYK/CPU 预览)" />
      </div>
      <div className="flex min-h-0 flex-1">
        <Canvas />
        <div className="flex w-[18px] shrink-0 flex-col items-center justify-between bg-[#484846] py-[5px] text-[#a8a8a8]">
          <svg viewBox="0 0 8 6" className="h-[6px] w-2" fill="none" stroke="currentColor" strokeWidth="1.500"><path d="m1 5 3-3 3 3" /></svg>
          <div className="h-[26px] w-[14px] rounded-full bg-[#606062]" />
          <svg viewBox="0 0 8 6" className="h-[6px] w-2" fill="none" stroke="currentColor" strokeWidth="1.500"><path d="m1 1 3 3 3-3" /></svg>
        </div>
      </div>
      <StatusBar />
      <TransformPanel />
      <ScriptsPanel />
    </div>
  );
}

/* ---------- taskbar ---------- */

function Taskbar() {
  return (
    <div className="flex h-10 shrink-0 items-stretch bg-gradient-to-r from-[#1f3f4a] via-[#203a46] to-[#18273c] text-[13px] text-white">
      <button aria-label="开始" className="flex w-12 items-center justify-center">
        <svg viewBox="0 0 16 16" className="size-4" fill="#fff"><path d="m0 2 6.500-1v6.500H0zM7.500.8 16 0v7.500H7.500zM0 8.500h6.500V15L0 14zM7.500 8.500H16V16l-8.500-1z" /></svg>
      </button>
      <button className="flex w-[52px] items-center justify-center"><AiBadge className="size-[21px] text-xs" /></button>
      <button className="flex w-[48px] items-center justify-center"><AiBadge framed className="size-[21px] text-xs" /></button>
      <button className="flex w-[49px] items-center justify-center border-b-2 border-[#76b9ed] bg-[#4c6a76]"><AiBadge className="size-[21px] text-xs" /></button>
      <button aria-label="录屏工具" className="ml-1 flex w-10 items-center justify-center border-b-2 border-[#76b9ed]">
        <svg viewBox="0 0 21 20" className="h-5 w-[21px]">
          <path d="M0 0h21v20H0z" fill="#dcdce0" />
          <path d="m13 2-7 5 1 4 4-2v-3z" fill="#5a1238" />
          <path d="m8 12 6-5 2 4-4 7-1-4z" fill="#5a1238" />
        </svg>
      </button>
      <div className="ml-auto flex items-center">
        <svg viewBox="0 0 16 16" className="size-[15px]">
          <circle cx="8" cy="4" r="3.500" fill="#f5b8b8" /><circle cx="12" cy="7" r="3.500" fill="#f9caca" /><circle cx="11" cy="12" r="3.500" fill="#f5b8b8" />
          <circle cx="5" cy="12" r="3.500" fill="#f9caca" /><circle cx="4" cy="7" r="3.500" fill="#f5b8b8" /><circle cx="8" cy="8.500" r="2.500" fill="#e66a7a" />
        </svg>
        <svg viewBox="0 0 16 14" className="ml-2 h-[14px] w-4">
          <path d="M0 3h16v11H0z" fill="#111" /><path d="M1 3h14v2H1zM6 1h4v2H6z" fill="#eee" /><circle cx="8" cy="8.500" r="4" fill="#ddd" /><circle cx="8" cy="8.500" r="2" fill="#555" />
        </svg>
        <svg viewBox="0 0 16 16" className="ml-2 size-4">
          <circle cx="8" cy="8" r="8" fill="#3fae29" /><circle cx="8" cy="8" r="6.500" fill="#fbd914" /><path d="M8 4v8M4 8h8" stroke="#2c8a1c" strokeWidth="2.500" />
        </svg>
        <svg viewBox="0 0 16 14" className="ml-2 h-3 w-4">
          <path d="M0 0h16v14H0z" fill="#1c3a14" /><path d="M6 0h10v14H6z" fill="#76b900" /><path d="M1 7c4-6 10-6 14 0-4 5-10 5-14 0z" fill="none" stroke="#1c3a14" strokeWidth="1.500" /><path d="M1 7c2-3 4-4 5-4v8C4 11 2 9 1 7z" fill="none" stroke="#76b900" strokeWidth="1.300" /><circle cx="8" cy="7" r="2" fill="#1c3a14" />
        </svg>
        <svg viewBox="0 0 18 14" className="ml-2 h-[14px] w-[18px]" fill="none" stroke="#fff" strokeWidth="1.200">
          <path d="M1 5h3l4-4v12L4 9H1zM10 5q1.500 2 0 4M12.500 3q3 4 0 8M15 1q4.500 6 0 12" />
        </svg>
        <button className="ml-[6px] text-sm">英</button>
        <button className="ml-[14px] flex size-4 items-center justify-center rounded-[2px] bg-[#2f8cf0] text-xs font-bold">五</button>
        <div className="mr-[6px] ml-[19px] text-center text-xs leading-[19px] whitespace-nowrap">
          <div>5:56</div>
          <div>2023/2/22 星期三</div>
        </div>
        <span className="mr-[4px] h-10 w-px bg-[#56606c]" />
      </div>
    </div>
  );
}

export default function App() {
  return (
    <div className={clsx("relative flex h-screen flex-col overflow-hidden bg-[#505052]", sans)}>
      <MenuBar />
      <ControlBar />
      <div className="flex min-h-0 flex-1">
        <ToolRail />
        <DocumentWindow />
        <PanelDock />
      </div>
      <div className="h-[3px] shrink-0 bg-[#45454a]" />
      <Taskbar />
      {/* level meter docked to the screen edge */}
      <div className="absolute right-[2px] bottom-[91px] flex h-[61px] w-[9px] flex-col overflow-hidden rounded-full border border-[#c8c8b8] bg-[#30302c]">
        <div className="mt-auto h-[43px] bg-gradient-to-b from-[#1eb85c] to-[#6ee068]" />
      </div>
    </div>
  );
}
